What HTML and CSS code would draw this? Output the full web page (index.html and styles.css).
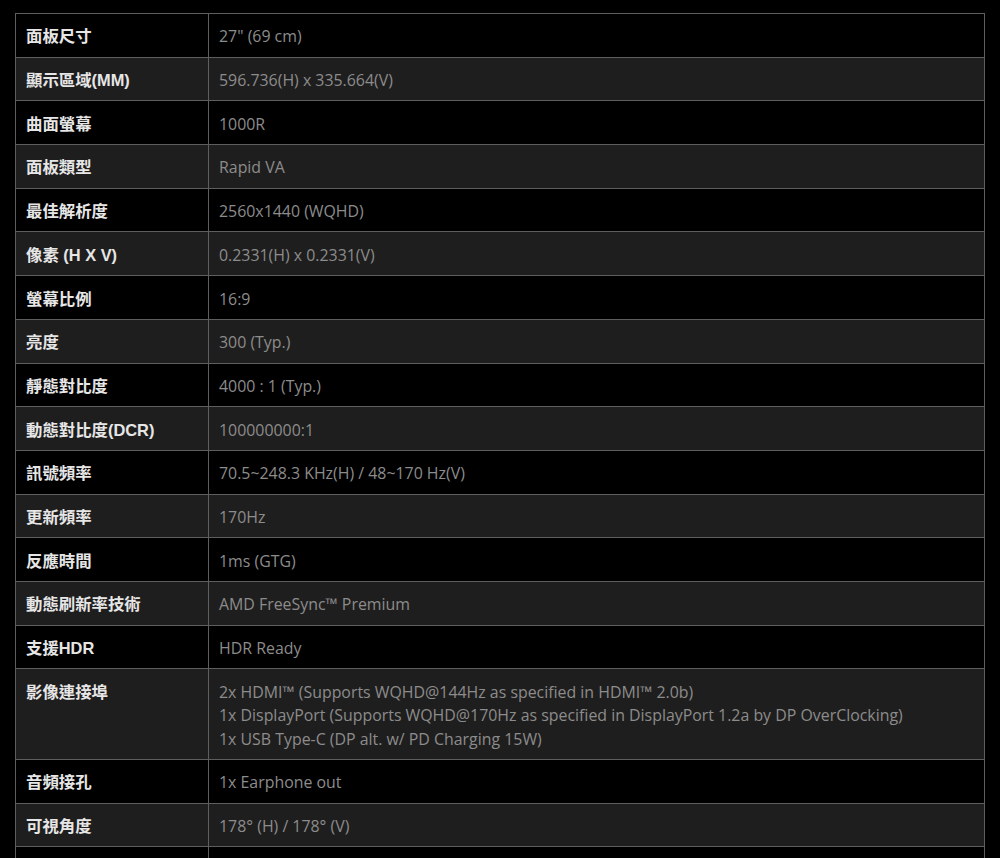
FILE: index.html
```html
<!DOCTYPE html>
<html lang="zh-Hant">
<head>
<meta charset="utf-8">
<link rel="stylesheet" href="styles.css">
</head>
<body>
<div class="wrap">
<table class="spec">
<tbody>
<tr><th>面板尺寸</th><td>27" (69 cm)</td></tr>
<tr class="alt"><th>顯示區域(MM)</th><td>596.736(H) x 335.664(V)</td></tr>
<tr><th>曲面螢幕</th><td>1000R</td></tr>
<tr class="alt"><th>面板類型</th><td>Rapid VA</td></tr>
<tr><th>最佳解析度</th><td>2560x1440 (WQHD)</td></tr>
<tr class="alt"><th>像素 (H X V)</th><td>0.2331(H) x 0.2331(V)</td></tr>
<tr><th>螢幕比例</th><td>16:9</td></tr>
<tr class="alt"><th>亮度</th><td>300 (Typ.)</td></tr>
<tr><th>靜態對比度</th><td>4000 : 1 (Typ.)</td></tr>
<tr class="alt"><th>動態對比度(DCR)</th><td>100000000:1</td></tr>
<tr><th>訊號頻率</th><td>70.5~248.3 KHz(H) / 48~170 Hz(V)</td></tr>
<tr class="alt"><th>更新頻率</th><td>170Hz</td></tr>
<tr><th>反應時間</th><td>1ms (GTG)</td></tr>
<tr class="alt"><th>動態刷新率技術</th><td>AMD FreeSync™ Premium</td></tr>
<tr><th>支援HDR</th><td>HDR Ready</td></tr>
<tr class="alt"><th>影像連接埠</th><td>2x HDMI™ (Supports WQHD@144Hz as specified in HDMI™ 2.0b)<br>1x DisplayPort (Supports WQHD@170Hz as specified in DisplayPort 1.2a by DP OverClocking)<br>1x USB Type-C (DP alt. w/ PD Charging 15W)</td></tr>
<tr><th>音頻接孔</th><td>1x Earphone out</td></tr>
<tr class="alt"><th>可視角度</th><td>178° (H) / 178° (V)</td></tr>
<tr><th>&nbsp;</th><td>&nbsp;</td></tr>
</tbody>
</table>
</div>
</body>
</html>
```

FILE: styles.css
```css
html, body {
  margin: 0;
  padding: 0;
  background: #000;
  overflow: hidden;
}
.wrap {
  padding: 13px 15px 0 15px;
}
.spec {
  width: 970px;
  border-collapse: collapse;
  table-layout: fixed;
}
.spec th, .spec td {
  border: 1px solid #5e5e5e;
  padding: 11.4px 10px 7.8px 10px;
  line-height: 23.5px;
  text-align: left;
  vertical-align: top;
}
.spec th {
  width: 172px;
  color: #e6e6e6;
  font-size: 16.4px;
  font-weight: 700;
  font-family: "Liberation Sans", "Noto Sans CJK TC", sans-serif;
}
.spec td {
  color: #8c8c8c;
  font-size: 15.9px;
  font-weight: 400;
  font-family: "Open Sans", "Noto Sans CJK TC", sans-serif;
}
.spec tr.alt {
  background: #1f1e1e;
}
```
